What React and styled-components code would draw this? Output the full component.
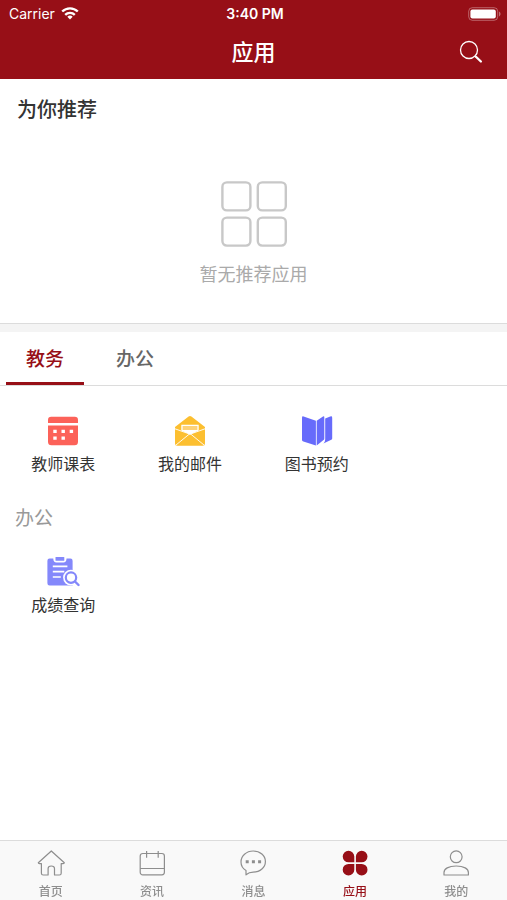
import React, { useState } from "react";
import styled, { createGlobalStyle } from "styled-components";

const RED = "#970f17";

const recommended = [];

const tabs = [
  { id: "teaching", label: "教务" },
  { id: "office", label: "办公" },
];

const App = () => {
  const [activeTab, setActiveTab] = useState("teaching");
  const [activeNav, setActiveNav] = useState("apps");

  return (
    <StyledPage>
      <GlobalStyle />
      <StyledHeader>
        <StyledStatusBar>
          <StyledCarrier>
            Carrier
            <WifiIcon />
          </StyledCarrier>
          <StyledTime>3:40 PM</StyledTime>
          <StyledBattery>
            <BatteryIcon />
          </StyledBattery>
        </StyledStatusBar>
        <StyledTitleBar>
          <StyledTitle>应用</StyledTitle>
          <StyledSearchButton type="button" aria-label="搜索">
            <SearchIcon />
          </StyledSearchButton>
        </StyledTitleBar>
      </StyledHeader>
      <StyledMain>
        <StyledRecommend>
          <StyledRecommendTitle>为你推荐</StyledRecommendTitle>
          {recommended.length === 0 && (
            <StyledEmpty>
              <GridIcon />
              <p>暂无推荐应用</p>
            </StyledEmpty>
          )}
        </StyledRecommend>
        <StyledTabs>
          {tabs.map(({ id, label }) => (
            <StyledTab
              key={id}
              type="button"
              $active={id === activeTab}
              onClick={() => setActiveTab(id)}
            >
              {label}
            </StyledTab>
          ))}
        </StyledTabs>
        <StyledAppGrid>
          <AppItem icon={<TimetableIcon />} label="教师课表" />
          <AppItem icon={<MailIcon />} label="我的邮件" />
          <AppItem icon={<BookIcon />} label="图书预约" />
        </StyledAppGrid>
        <StyledGroupTitle>办公</StyledGroupTitle>
        <StyledAppGrid>
          <AppItem icon={<ScoreIcon />} label="成绩查询" />
        </StyledAppGrid>
      </StyledMain>
      <StyledNav>
        {navItems.map(({ id, label, Icon }) => (
          <StyledNavButton
            key={id}
            type="button"
            $active={id === activeNav}
            onClick={() => setActiveNav(id)}
          >
            <Icon />
            {label}
          </StyledNavButton>
        ))}
      </StyledNav>
    </StyledPage>
  );
};

const AppItem = ({ icon, label }) => (
  <StyledAppButton type="button">
    {icon}
    {label}
  </StyledAppButton>
);

const WifiIcon = () => (
  <svg width="18" height="14" viewBox="0 0 18 14" fill="none" stroke="#fff" strokeWidth="2.4">
    <path d="M1.2 4.500a11.200 11.200 0 0 1 15.600 0" />
    <path d="M4.200 7.800a6.900 6.900 0 0 1 9.600 0" />
    <path d="M9 12.500 6.300 9.800a3.900 3.900 0 0 1 5.400 0z" fill="#fff" stroke="none" />
  </svg>
);

const BatteryIcon = () => (
  <svg width="33" height="14" viewBox="0 0 33 14">
    <rect x="0.7" y="0.7" width="29" height="12.6" rx="3.6" fill="none" stroke="#fff" strokeOpacity="0.35" />
    <rect x="2.4" y="2.4" width="25.4" height="9.2" rx="2" fill="#fff" />
    <path d="M31 4.6c2 .8 2 4 0 4.8z" fill="#fff" fillOpacity="0.4" />
  </svg>
);

const SearchIcon = () => (
  <svg width="24" height="24" viewBox="0 0 24 24" fill="none" stroke="#fff">
    <circle cx="10" cy="10" r="8.5" strokeWidth="1.3" />
    <path d="m15.800 16.200 1.300 1" strokeWidth="1.3" />
    <path d="m17.200 17 4.700 4.500" strokeWidth="2.3" strokeLinecap="round" />
  </svg>
);

const GridIcon = () => (
  <svg width="66" height="66" viewBox="0 0 66 66" fill="none" stroke="#c8c8c8" strokeWidth="2.4">
    <rect x="1.4" y="1.4" width="28" height="28" rx="4.5" />
    <rect x="36.8" y="1.4" width="28" height="28" rx="4.5" />
    <rect x="1.4" y="36.6" width="28" height="28" rx="4.5" />
    <rect x="36.8" y="36.6" width="28" height="28" rx="4.5" />
  </svg>
);

const TimetableIcon = () => (
  <svg width="34" height="34" viewBox="0 0 34 34" fill="#fc6259">
    <path d="M2 9V6a3.200 3.200 0 0 1 3.200-3.200h23.600A3.200 3.200 0 0 1 32 6v3z" />
    <path d="M2 11.400h30v16.300a3.500 3.500 0 0 1-3.500 3.500h-23A3.500 3.500 0 0 1 2 27.700z" />
    <path
      fill="#fff"
      d="M7.300 15.700h3.400v3.400H7.300zM15.500 15.700h3.400v3.400h-3.400zM23.700 15.700h3.400v3.400h-3.400zM7.300 22.400h3.400v3.400H7.300zM15.500 22.400h3.400v3.400h-3.400z"
    />
  </svg>
);

const MailIcon = () => (
  <svg width="34" height="34" viewBox="0 0 34 34">
    <path
      d="M2 13 15.600 2.500q1.400-1 2.800 0L32 13v16.600a2.200 2.200 0 0 1-2.200 2.200H4.200A2.200 2.200 0 0 1 2 29.600z"
      fill="#fcbf30"
    />
    <path d="m2 14.800 15 5.400 15-5.400M3 31l14-11.500L31 31" fill="none" stroke="#fff" strokeWidth="0.9" />
    <path d="M8.300 10.800h17.400v5.800L17 20.400l-8.700-3.800z" fill="#fff" />
    <path d="M9.600 12h14.800v4H9.600z" fill="#fcd27a" />
  </svg>
);

const BookIcon = () => (
  <svg width="34" height="34" viewBox="0 0 34 34" fill="#676bfb">
    <path d="M2 3.500q0-1.600 1.600-1.100L15.900 6.800v24.600L3.400 27.600Q2 27.100 2 25.700z" />
    <path d="m16.700 6.800 6.300-4.300q1.300-.7 1.300.6v21.300q0 1-.8 1.600l-6.800 5.400z" />
    <path d="m25.200 4.600 5-2.200q2-.7 2 1.300v20.700q0 1-.9 1.300l-7.900 3.800q1.800-1.700 1.800-3.900z" />
  </svg>
);

const ScoreIcon = () => (
  <svg width="34" height="34" viewBox="0 0 34 34">
    <path
      d="M3.600 3.500h3.700q0 4 3.200 4h6.800q3.200 0 3.200-4h3.900q2.200 0 2.200 2.200v24.800H3.600q-2.200 0-2.200-2.200V5.700q0-2.200 2.200-2.200z"
      fill="#8488fb"
    />
    <rect x="9.5" y="2" width="8.8" height="3.8" rx="0.6" fill="#8488fb" />
    <path d="M6.800 11.300h14.600M6.800 16.600h11.500M6.800 22h8" stroke="#fff" strokeWidth="1.7" />
    <circle cx="25" cy="22.600" r="7.900" fill="#fff" />
    <circle cx="25" cy="22.600" r="5.200" fill="none" stroke="#8488fb" strokeWidth="2.2" />
    <path d="m29 26.500 3.500 3.500" stroke="#8488fb" strokeWidth="2.4" strokeLinecap="round" />
  </svg>
);

const HomeIcon = () => (
  <svg width="28" height="28" viewBox="0 0 28 28" fill="none" stroke="currentColor" strokeWidth="1.2" strokeLinejoin="round">
    <path d="M14.300 2 1.300 13.800q0 .8 1.200.8h1.900v9.600q0 1.800 1.800 1.800h4.900v-6.600q0-2.400 3.200-2.400t3.200 2.400V26h4.900q1.800 0 1.800-1.800v-9.600h1.900q1.200 0 1.200-.8z" />
  </svg>
);

const NewsIcon = () => (
  <svg width="28" height="28" viewBox="0 0 28 28" fill="none" stroke="currentColor" strokeWidth="1.2">
    <rect x="2.200" y="4.500" width="24.200" height="21.300" rx="2.500" />
    <path d="M2.200 19.500h24.200M8.600 2v6.700M20.200 2v6.700" />
  </svg>
);

const MessageIcon = () => (
  <svg width="28" height="28" viewBox="0 0 28 28" fill="none" stroke="currentColor" strokeWidth="1.2" strokeLinejoin="round">
    <path d="M7 25.800v-4.300C3.700 19.500 2 16.500 2 13 2 6.900 7.300 2 14.200 2s12.200 4.600 12.200 10.500-5.200 10.700-12.200 10.700c-2.600 0-5 .8-7.200 2.600z" />
    <path d="M6.700 12.700h3M12.900 12.700h3M19.100 12.700h3" strokeWidth="3" />
  </svg>
);

const AppsIcon = () => (
  <svg width="28" height="28" viewBox="0 0 28 28" fill="currentColor">
    <path d="M13.300 13.300H7.600a5.800 5.800 0 1 1 5.700-5.800z" />
    <path d="M14.900 13.300h5.700a5.800 5.800 0 1 0-5.700-5.800z" />
    <path d="M13.300 14.900H7.600a5.800 5.800 0 1 0 5.700 5.800z" />
    <path d="M14.900 14.900h5.700a5.800 5.800 0 1 1-5.700 5.800z" />
  </svg>
);

const MineIcon = () => (
  <svg width="28" height="28" viewBox="0 0 28 28" fill="none" stroke="currentColor" strokeWidth="1.2" strokeLinejoin="round">
    <circle cx="14.200" cy="7.800" r="5.900" />
    <path d="M2 26v-2.500c0-3.700 4.500-6.500 12.200-6.500s12.200 2.800 12.200 6.500V26z" />
  </svg>
);

const navItems = [
  { id: "home", label: "首页", Icon: HomeIcon },
  { id: "news", label: "资讯", Icon: NewsIcon },
  { id: "message", label: "消息", Icon: MessageIcon },
  { id: "apps", label: "应用", Icon: AppsIcon },
  { id: "mine", label: "我的", Icon: MineIcon },
];

const GlobalStyle = createGlobalStyle`
  * {
    box-sizing: border-box;
  }
  body {
    margin: 0;
    background-color: white;
    font-family: Inter, "Noto Sans CJK SC", sans-serif;
    color: #333;
  }
  button {
    margin: 0;
    padding: 0;
    border: none;
    background: none;
    color: inherit;
    font-family: inherit;
    cursor: pointer;
  }
  h1, h2, h3, p {
    margin: 0;
  }
  svg {
    display: block;
    flex-shrink: 0;
  }
`;

const StyledPage = styled.div`
  display: flex;
  flex-direction: column;
  min-height: 100vh;
`;

const StyledHeader = styled.header`
  background-color: ${RED};
  color: white;
`;

const StyledStatusBar = styled.div`
  display: grid;
  grid-template-columns: 1fr auto 1fr;
  align-items: center;
  height: 27px;
  padding: 0 6px 0 9px;
  font-size: 14px;
`;

const StyledCarrier = styled.span`
  display: flex;
  align-items: center;
  gap: 6px;
`;

const StyledTime = styled.span`
  font-weight: 600;
`;

const StyledBattery = styled.span`
  justify-self: end;
`;

const StyledTitleBar = styled.div`
  display: grid;
  grid-template-columns: 1fr auto 1fr;
  align-items: center;
  padding: 9px 24px 11px;
`;

const StyledTitle = styled.h1`
  grid-column: 2;
  font-size: 22px;
  line-height: 32px;
  font-weight: 500;
`;

const StyledSearchButton = styled.button`
  justify-self: end;
`;

const StyledMain = styled.main`
  flex: 1;
`;

const StyledRecommend = styled.section`
  padding: 17px 17px 35px;
  border-bottom: 1px solid #dcdcdc;
`;

const StyledRecommendTitle = styled.h2`
  font-size: 20px;
  line-height: 28px;
  font-weight: 500;
`;

const StyledEmpty = styled.div`
  display: flex;
  flex-direction: column;
  align-items: center;
  gap: 14px;
  padding-top: 57px;
  font-size: 18px;
  line-height: 27px;
  color: #aaa;
`;

const StyledTabs = styled.div`
  display: flex;
  gap: 12px;
  margin-bottom: 6px;
  padding: 0 6px;
  border-top: 8px solid #f4f4f4;
  border-bottom: 1px solid #dcdcdc;
`;

const StyledTab = styled.button`
  width: 78px;
  height: 53px;
  border-bottom: 3px solid ${({ $active }) => ($active ? RED : "transparent")};
  font-size: 19px;
  font-weight: 500;
  color: ${({ $active }) => ($active ? RED : "#666")};
`;

const StyledAppGrid = styled.div`
  display: grid;
  grid-template-columns: repeat(4, 1fr);
  padding: 22px 0 20px;
`;

const StyledAppButton = styled.button`
  display: flex;
  flex-direction: column;
  align-items: center;
  gap: 4px;
  font-size: 16px;
  line-height: 24px;
`;

const StyledGroupTitle = styled.h3`
  padding: 9px 15px 0;
  font-size: 19px;
  line-height: 28px;
  font-weight: 400;
  color: #999;
`;

const StyledNav = styled.nav`
  position: sticky;
  bottom: 0;
  display: grid;
  grid-template-columns: repeat(5, 1fr);
  height: 60px;
  border-top: 1px solid #dcdcdc;
  background-color: #f9f9f9;
`;

const StyledNavButton = styled.button`
  display: flex;
  flex-direction: column;
  align-items: center;
  gap: 6px;
  padding-top: 8px;
  font-size: 12px;
  line-height: 18px;
  font-weight: 500;
  color: ${({ $active }) => ($active ? RED : "#8e8e8e")};
`;

export default App;
